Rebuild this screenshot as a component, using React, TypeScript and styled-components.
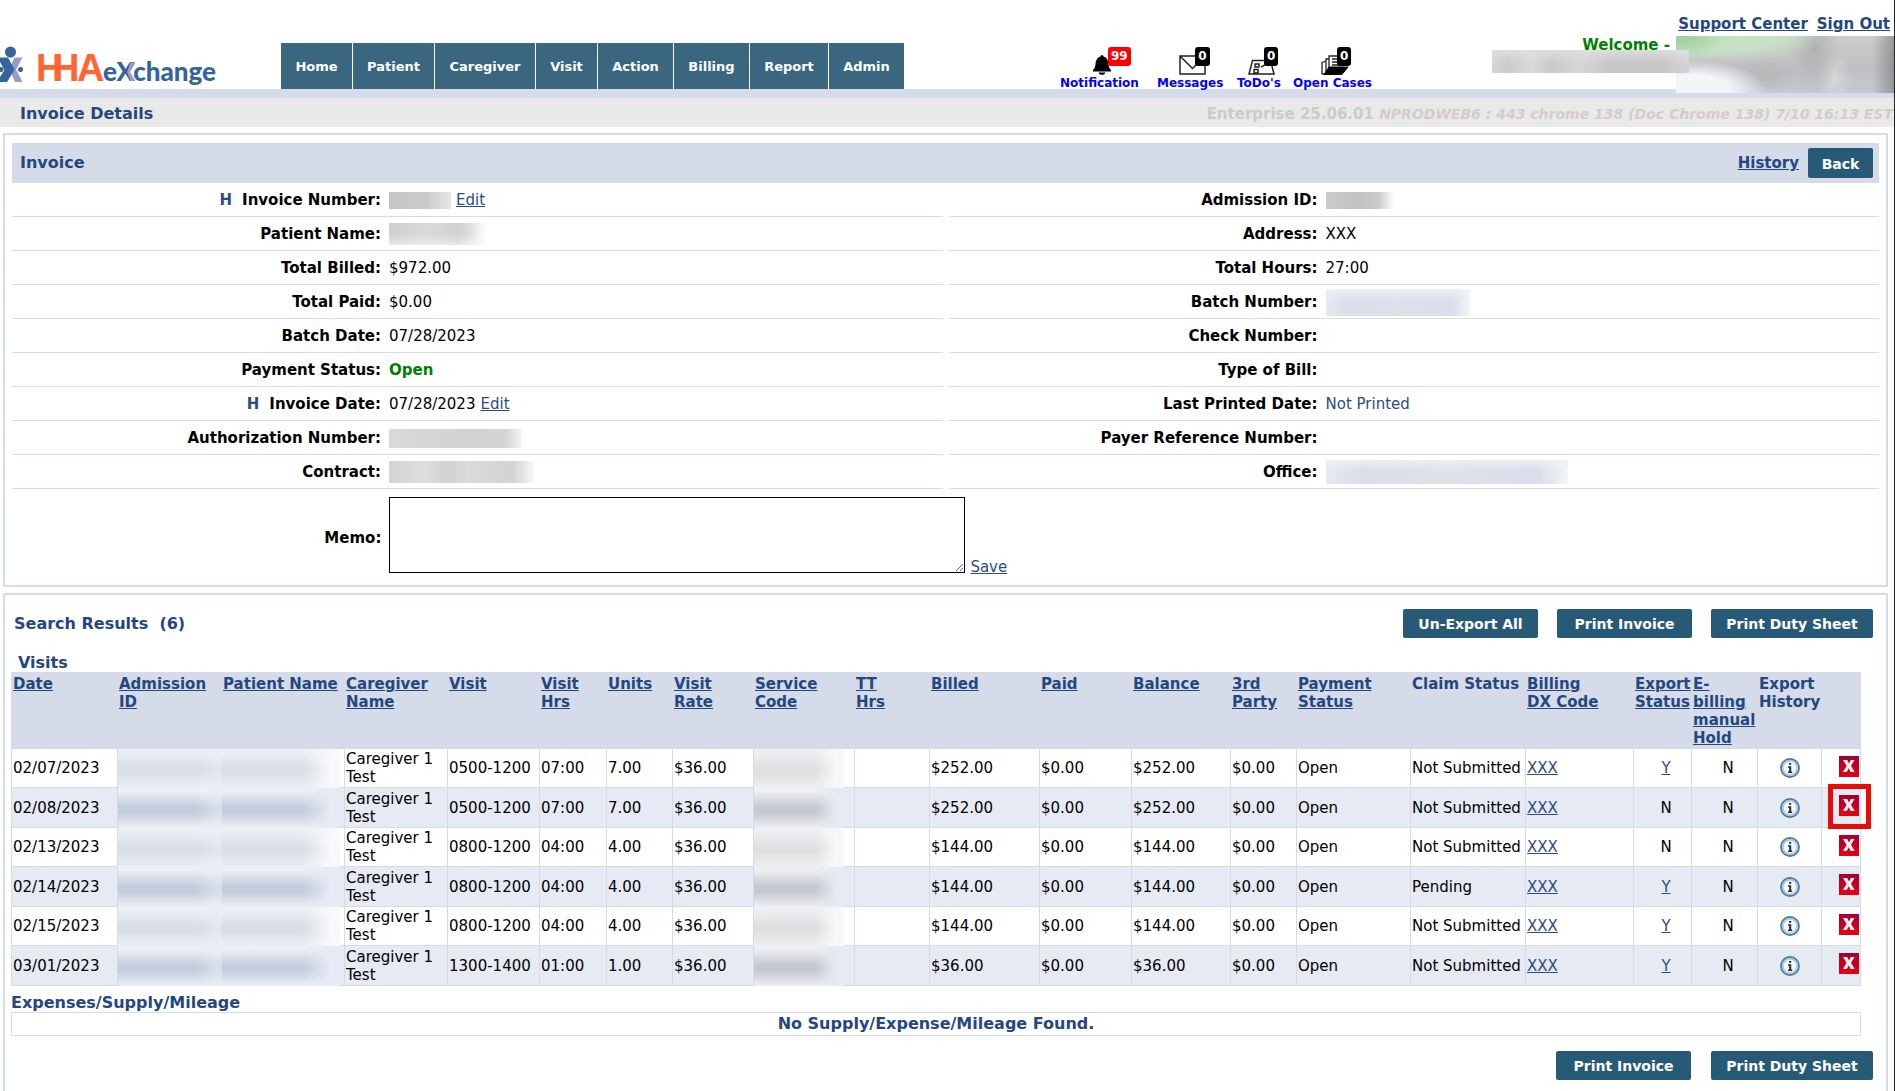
import React from "react";
import styled, { createGlobalStyle, css } from "styled-components";

const colors = {
  navy: "#24477f",
  link: "#2c4a86",
  line: "#d5dbe9",
  stripe: "#e5eaf3",
  button: "#275a77",
  nav: "#3b667f",
};

const GlobalStyle = createGlobalStyle`
  *, *::before, *::after { box-sizing: border-box; }
  html { background: #222; }
  body {
    margin: 0 1px 0 0;
    min-height: 100vh;
    background: #fff;
    color: #000;
    font: 15px/18px "DejaVu Sans", Verdana, sans-serif;
    overflow-x: hidden;
  }
`;

/* ---------- shared parts ---------- */

const Link = styled.a<{ $bold?: boolean }>`
  color: ${(p) => (p.$bold ? colors.navy : colors.link)};
  font-weight: ${(p) => (p.$bold ? 700 : 400)};
`;

const Button = styled.button<{ $wide?: number; $tall?: boolean }>`
  height: ${(p) => (p.$tall ? 30 : 29)}px;
  width: ${(p) => p.$wide}px;
  padding: 1px 0 0;
  border: 0;
  border-radius: 2px;
  background: ${colors.button};
  color: #fff;
  font: 700 14px/18px "DejaVu Sans", Verdana, sans-serif;
  cursor: pointer;
`;

const Heading = styled.h2`
  margin: 0;
  color: ${colors.navy};
  font-size: 16px;
  line-height: 18px;
  font-weight: 700;
`;

const Panel = styled.section`
  margin: 0 6px 6px 3px;
  border: 2px solid ${colors.line};
`;

const greyBlur = "linear-gradient(90deg, #c6c6c5, #c9cac9 60%, #e6e7e9)";
const paleBlur =
  "linear-gradient(180deg, rgba(255,255,255,0) 50%, rgba(255,255,255,.5)), linear-gradient(90deg, #cfcfcf, #dadada 40%, #cfd2d1 70%, #d9dbdb 80%, #fff)";
const blueBlur =
  "linear-gradient(180deg, rgba(238,240,245,.9), rgba(238,240,245,0) 45%), linear-gradient(90deg, #e6e9f0, #d9dee9 15%, #dde1ea 50%, #d8deea 88%, #f3f5f9)";

const Redacted = styled.span<{ $w: number; $h: number; $bg: string }>`
  display: inline-block;
  flex: none;
  width: ${(p) => p.$w}px;
  height: ${(p) => p.$h}px;
  background: ${(p) => p.$bg};
`;

/* ---------- header ---------- */

const Header = styled.header`
  display: flex;
  align-items: flex-end;
  height: 89px;
`;

const Nav = styled.nav`
  display: flex;
  gap: 1px;
  margin-left: 59px;
`;

const NavItem = styled.a<{ $wide: number }>`
  width: ${(p) => p.$wide}px;
  height: 46px;
  padding-top: 15px;
  background: ${colors.nav};
  color: #fff;
  font-weight: 700;
  font-size: 13px;
  line-height: 18px;
  text-align: center;
  text-decoration: none;
`;

const Alerts = styled.div`
  display: grid;
  grid-template-columns: 97px 80px 56px 80px;
  margin-left: 156px;
`;

const Alert = styled.a`
  display: flex;
  flex-direction: column;
  justify-self: start;
  align-items: center;
  color: #0000ff;
  font-weight: 700;
  font-size: 12px;
  line-height: 12px;
  white-space: nowrap;
  text-decoration: none;
`;

const AlertIcon = styled.span`
  position: relative;
  display: block;
  height: 28px;
  padding-top: 8px;
  margin: 0 0 2px 5px;
  svg { display: block; }
`;

const Badge = styled.span<{ $red?: boolean }>`
  position: absolute;
  top: 0;
  left: 16px;
  padding: 0 3px;
  border-radius: 3px;
  background: ${(p) => (p.$red ? "#f00" : "#000")};
  color: #fff;
  font-size: 12px;
  line-height: 19px;
`;

const UserArea = styled.div`
  align-self: flex-start;
  margin-left: auto;
  padding-top: 15px;
  position: relative;
  z-index: 1;
`;

const UserLinks = styled.div`
  display: flex;
  justify-content: flex-end;
  gap: 9px;
  padding-right: 4px;
  margin-bottom: 3px;
`;

const Welcome = styled.div`
  display: flex;
  justify-content: flex-end;
  gap: 6px;
  height: 57px;
  color: #008000;
  font-weight: 700;
  position: relative;
`;

const UserBlur = styled.span`
  width: 218px;
  height: 57px;
  background:
    linear-gradient(90deg, transparent 90%, rgba(100,100,105,.5)),
    radial-gradient(ellipse 75px 30px at 16px 54px, #f4f5f9 50%, transparent 100%),
    radial-gradient(ellipse 44px 22px at 8px 0, #a4d1a2 20%, transparent 100%),
    radial-gradient(ellipse 110px 26px at 40px 0, #c6e2c6 55%, transparent 100%),
    radial-gradient(ellipse 26px 50px at 138px 10px, #b2b2b2, transparent 100%),
    radial-gradient(ellipse 18px 30px at 158px 42px, #d6d6d8, transparent 100%),
    radial-gradient(ellipse 40px 16px at 90px 40px, #b4b6b8, transparent 100%),
    linear-gradient(180deg, #cdcdcd, #c0c0c0 55%, #c6c9d2);
`;

const AgencyBlur = styled.span`
  position: absolute;
  right: 205px;
  top: 14px;
  width: 197px;
  height: 23px;
  background:
    linear-gradient(180deg, rgba(225,225,225,.8), transparent 60%),
    linear-gradient(90deg, #d6d5d3, #cbcbcb 8%, #dadada 20%, #c9c9c9 30%, #d6d6d6 44%, #c6c6c6 60%, #c6c6c6 85%, #d3d4d2);
`;

const Band = styled.div`
  height: 9px;
  background: ${colors.line};
`;

const TitleBar = styled.div`
  display: flex;
  align-items: center;
  justify-content: space-between;
  height: 29px;
  padding: 2px 1px 0 20px;
  margin-bottom: 6px;
  background: #e9e9e9;
`;

const Version = styled.div`
  color: #cbcbcb;
  font-weight: 700;
  white-space: nowrap;
  i { color: #d6cbcb; font-size: 14px; }
`;

/* ---------- invoice form ---------- */

const InvoiceBody = styled.div`
  padding: 8px 7px 12px;
`;

const InvoiceHead = styled.div`
  display: flex;
  align-items: center;
  gap: 9px;
  height: 40px;
  padding: 0 6px 0 8px;
  background: ${colors.line};
  ${Heading} { margin-right: auto; }
`;

const Columns = styled.div`
  display: grid;
  grid-template-columns: 1fr 1fr;
  column-gap: 6px;
`;

const Field = styled.div`
  display: grid;
  grid-template-columns: 2fr 3fr;
  column-gap: 8px;
  align-items: center;
  height: 34px;
  padding-top: 1px;
  border-bottom: 1px solid ${colors.line};
`;

const FieldLabel = styled.span`
  text-align: right;
  font-weight: 700;
`;

const HistoryMark = styled.a`
  margin-right: 10px;
  color: ${colors.link};
  text-decoration: none;
`;

const FieldValue = styled.span<{ $tone?: "green" | "link" }>`
  display: flex;
  align-items: center;
  gap: 5px;
  ${(p) => p.$tone === "green" && css`color: #008000; font-weight: 700;`}
  ${(p) => p.$tone === "link" && css`color: ${colors.link};`}
`;

const MemoRow = styled.div`
  display: flex;
  align-items: center;
  padding-top: 8px;
`;

const MemoLabel = styled.label`
  width: calc(20% - 4px);
  flex: none;
  text-align: right;
  font-weight: 700;
  padding-top: 6px;
`;

const MemoBox = styled.textarea`
  width: 576px;
  height: 76px;
  margin: 0 5px 0 8px;
  border: 1px solid #000;
  background: #fff;
  font: inherit;
`;

const MemoSave = styled(Link)`
  align-self: flex-end;
  line-height: 12px;
`;

/* ---------- results ---------- */

const Results = styled.div`
  padding: 14px 13px 40px 6px;
`;

const ResultsHead = styled.div`
  display: flex;
  align-items: center;
  gap: 19px;
  padding-left: 3px;
  margin-bottom: 16px;
  ${Heading} { margin-right: auto; }
`;

const TableArea = styled.div`
  margin-right: 12px;
`;

const Table = styled.table`
  width: 100%;
  table-layout: fixed;
  border-collapse: collapse;
  caption {
    padding-left: 7px;
    text-align: left;
    color: ${colors.navy};
    font-size: 16px;
    font-weight: 700;
  }
`;

const Th = styled.th`
  padding: 2px 0 1px 1px;
  background: ${colors.line};
  border: 1px solid ${colors.line};
  color: ${colors.navy};
  text-align: left;
  vertical-align: top;
  font-weight: 700;
`;

const Row = styled.tr<{ $shaded: boolean }>`
  height: ${(p) => (p.$shaded ? 40 : 39)}px;
  background: ${(p) => (p.$shaded ? colors.stripe : "#fff")};
`;

const Td = styled.td<{ $align?: "center" | "mark" | "right" }>`
  position: relative;
  padding: 1px 0 1px 1px;
  border: 1px solid ${colors.line};
  ${(p) => p.$align === "mark" && css`text-align: center; padding-left: 7px;`}
  ${(p) => p.$align === "center" && css`text-align: center; padding: 0;`}
  ${(p) => p.$align === "right" && css`text-align: right; padding: 0 1px 4px 0;`}
`;

const CellBlur = styled.span<{
  $shaded: boolean;
  $tint: "blue" | "grey";
  $right: number;
  $fade?: boolean;
}>`
  position: absolute;
  top: 0;
  bottom: -1px;
  left: 0;
  right: ${(p) => p.$right}px;
  background: ${(p) => {
    const edge = p.$tint === "blue" ? "#eceff5" : "#eeeff2";
    const core =
      p.$tint === "blue" ? (p.$shaded ? "#c3cddd" : "#d9dde6") : p.$shaded ? "#c4c8d1" : "#dfe0df";
    const side = p.$shaded ? colors.stripe : "#f7f8fa";
    const fade = p.$fade
      ? `linear-gradient(90deg, transparent 68%, ${side} 92%)`
      : `linear-gradient(90deg, transparent 75%, ${edge}80 95%)`;
    return `${fade}, linear-gradient(180deg, ${edge} 8%, ${core} 48%, ${core} 62%, ${edge} 100%)`;
  }};
`;

const IconButton = styled.button`
  display: inline-block;
  padding: 0;
  border: 0;
  background: none;
  vertical-align: middle;
  cursor: pointer;
  svg { display: block; }
`;

const Highlight = styled.span`
  position: absolute;
  top: -4px;
  right: -11px;
  width: 43px;
  height: 45px;
  border: 5px solid #ea0a0a;
  pointer-events: none;
  z-index: 1;
`;

const SubHeading = styled(Heading)`
  margin-top: 8px;
`;

const EmptyNote = styled.p`
  margin: 0 0 15px;
  height: 24px;
  border: 1px solid ${colors.line};
  color: ${colors.navy};
  font-size: 16px;
  line-height: 22px;
  font-weight: 700;
  text-align: center;
`;

const Footer = styled.div`
  display: flex;
  justify-content: flex-end;
  gap: 20px;
`;

/* ---------- drawings ---------- */

const Logo = () => (
  <svg width="222" height="45" viewBox="0 0 222 45" role="img" aria-label="HHAeXchange">
    <circle cx="10.500" cy="8" r="5.500" fill="#33659a" />
    <path d="M14.500 13.500H22.500L16 25.500 22.500 38H15L10.500 28 9 25.500Z" fill="#9b98cd" />
    <path d="M0 13.500H8L14.500 25.500 7 38H0V33L4.500 26 0 18Z" fill="#33659a" />
    <circle cx="1" cy="25.500" r="2.500" fill="#33659a" />
    <circle cx="20.500" cy="25.500" r="2.500" fill="#33659a" />
    <text
      x="36 52 77"
      y="37"
      fill="#ff6633"
      fontFamily="Liberation Sans, Arial, sans-serif"
      fontWeight="700"
      fontSize="38"
    >
      HHA
    </text>
    <text x="103" y="37" fill="#33659a" fontFamily="Lato, sans-serif" fontWeight="900" fontSize="26">
      e<tspan>X</tspan>change
    </text>
    <path d="M130.500 18.500H135.500L130 28 135.500 37H130.500L127 28Z" fill="#9b98cd" />
  </svg>
);

const BellIcon = () => (
  <svg width="20" height="20" viewBox="0 0 20 20">
    <path d="M8.500 1.500a1.500 1.500 0 0 1 3 0C15 2.500 16 5 16.500 9c.3 3 .8 4.500 2.500 6v1.500H1V15c1.700-1.500 2.200-3 2.500-6C4 5 5 2.500 8.500 1.500ZM6.500 17.500h7c-.5 1.500-1.700 2.300-3.500 2.300s-3-.8-3.500-2.300Z" />
  </svg>
);

const MailIcon = () => (
  <svg width="27" height="20" viewBox="0 0 27 20" fill="none" stroke="#222" strokeWidth="1.500">
    <path d="M1 1h25v18H1zM1 1l12.500 12.500L26 1" />
  </svg>
);

const TodoIcon = () => (
  <svg width="27" height="20" viewBox="0 0 27 20" fill="none" stroke="#222" strokeWidth="1.500">
    <path d="M4.500 5.500h18L26 19H1zM7 9h4v3H7zM6 14.500h4V18H6zM13 12l4-2 3-4" />
  </svg>
);

const CasesIcon = () => (
  <svg width="28" height="20" viewBox="0 0 28 20" fill="none" stroke="#222" strokeWidth="1.300">
    <path d="M1 19V7.500L5 6M1 19h4M5 18V4h3M8 12V1h15v10M11 4h9M11 7h9M11 10h9" />
    <path d="M8 12h19l-6 7.500H3z" fill="#000" stroke="#000" strokeWidth="1" />
  </svg>
);

const InfoIcon = () => (
  <svg width="20" height="20" viewBox="0 0 20 20">
    <circle cx="10" cy="10" r="9" fill="#f6f9fc" stroke="#4a79a6" strokeWidth="1.800" />
    <circle cx="10" cy="10" r="7.300" fill="none" stroke="#a9c4dd" strokeWidth="1.800" />
    <path d="M9 5h2.200v1.800H9zM8 8.300h3.200v5.200h1V15H8v-1.500h1.200V9.700H8z" fill="#2b2b2b" />
  </svg>
);

const DeleteIcon = () => (
  <svg width="20" height="21" viewBox="0 0 20 21">
    <defs>
      <linearGradient id="deleteFill" x1="0" y1="0" x2="0" y2="1">
        <stop offset="0" stopColor="#a00034" />
        <stop offset="1" stopColor="#e6000f" />
      </linearGradient>
    </defs>
    <rect width="20" height="21" fill="url(#deleteFill)" />
    <path
      d="M4 4h4.200L10 7.500 11.800 4H15.500L12 9.800 15.700 16H11.600L9.700 12.300 7.800 16H3.800L7.600 9.900Z"
      fill="#fbeef2"
    />
  </svg>
);

/* ---------- data ---------- */

const navItems = [
  { label: "Home", width: 71 },
  { label: "Patient", width: 81 },
  { label: "Caregiver", width: 100 },
  { label: "Visit", width: 61 },
  { label: "Action", width: 75 },
  { label: "Billing", width: 75 },
  { label: "Report", width: 78 },
  { label: "Admin", width: 75 },
];

const alerts = [
  { label: "Notification", count: 99, icon: <BellIcon /> },
  { label: "Messages", count: 0, icon: <MailIcon /> },
  { label: "ToDo's", count: 0, icon: <TodoIcon /> },
  { label: "Open Cases", count: 0, icon: <CasesIcon /> },
];

type FieldData = { label: string; mark?: boolean; value?: React.ReactNode; tone?: "green" | "link" };

const leftFields: FieldData[] = [
  { label: "Invoice Number:", mark: true, value: <><Redacted $w={62} $h={17} $bg={greyBlur} /><Link href="#">Edit</Link></> },
  { label: "Patient Name:", value: <Redacted $w={98} $h={22} $bg={paleBlur} /> },
  { label: "Total Billed:", value: "$972.00" },
  { label: "Total Paid:", value: "$0.00" },
  { label: "Batch Date:", value: "07/28/2023" },
  { label: "Payment Status:", value: "Open", tone: "green" },
  { label: "Invoice Date:", mark: true, value: <>07/28/2023<Link href="#">Edit</Link></> },
  { label: "Authorization Number:", value: <Redacted $w={132} $h={19} $bg="linear-gradient(90deg, #d9d9d9, #d2d2d2 60%, #d3d4d4 88%, #f0f1f3)" /> },
  { label: "Contract:", value: <Redacted $w={145} $h={22} $bg="linear-gradient(90deg, #d3d3d3, #dedede 25%, #d2d2d2 40%, #dadada 55%, #d3d3d3 85%, #f7f8f7)" /> },
];

const rightFields: FieldData[] = [
  { label: "Admission ID:", value: <Redacted $w={68} $h={17} $bg="linear-gradient(90deg, #cbcaca, #c2c3c2 50%, #c8c9c9 76%, #fff)" /> },
  { label: "Address:", value: "XXX" },
  { label: "Total Hours:", value: "27:00" },
  { label: "Batch Number:", value: <Redacted $w={144} $h={27} $bg={blueBlur} /> },
  { label: "Check Number:" },
  { label: "Type of Bill:" },
  { label: "Last Printed Date:", value: "Not Printed", tone: "link" },
  { label: "Payer Reference Number:" },
  { label: "Office:", value: <Redacted $w={242} $h={24} $bg={blueBlur} /> },
];

const columns: { label: string; width: number; plain?: boolean }[] = [
  { label: "Date", width: 106 },
  { label: "Admission ID", width: 104 },
  { label: "Patient Name", width: 123 },
  { label: "Caregiver Name", width: 103 },
  { label: "Visit", width: 92 },
  { label: "Visit Hrs", width: 67 },
  { label: "Units", width: 66 },
  { label: "Visit Rate", width: 81 },
  { label: "Service Code", width: 101 },
  { label: "TT\nHrs", width: 75 },
  { label: "Billed", width: 110 },
  { label: "Paid", width: 92 },
  { label: "Balance", width: 99 },
  { label: "3rd Party", width: 66 },
  { label: "Payment Status", width: 114 },
  { label: "Claim Status", width: 115, plain: true },
  { label: "Billing\nDX Code", width: 108 },
  { label: "Export Status", width: 58 },
  { label: "E-\nbilling manual Hold", width: 66 },
  { label: "Export History", width: 64, plain: true },
  { label: "", width: 39, plain: true },
];

const visits = [
  { date: "02/07/2023", time: "0500-1200", hrs: "07:00", units: "7.00", billed: "$252.00", claim: "Not Submitted", exported: true },
  { date: "02/08/2023", time: "0500-1200", hrs: "07:00", units: "7.00", billed: "$252.00", claim: "Not Submitted", exported: false, highlight: true },
  { date: "02/13/2023", time: "0800-1200", hrs: "04:00", units: "4.00", billed: "$144.00", claim: "Not Submitted", exported: false },
  { date: "02/14/2023", time: "0800-1200", hrs: "04:00", units: "4.00", billed: "$144.00", claim: "Pending", exported: true },
  { date: "02/15/2023", time: "0800-1200", hrs: "04:00", units: "4.00", billed: "$144.00", claim: "Not Submitted", exported: true },
  { date: "03/01/2023", time: "1300-1400", hrs: "01:00", units: "1.00", billed: "$36.00", claim: "Not Submitted", exported: true },
];

const HeaderLabel = styled(Link)`
  white-space: pre-line;
`;

const FieldList = ({ fields }: { fields: FieldData[] }) => (
  <div>
    {fields.map((f) => (
      <Field key={f.label}>
        <FieldLabel>
          {f.mark && <HistoryMark href="#">H</HistoryMark>}
          {f.label}
        </FieldLabel>
        <FieldValue $tone={f.tone}>{f.value}</FieldValue>
      </Field>
    ))}
  </div>
);

export default function App() {
  return (
    <>
      <GlobalStyle />
      <Header>
        <Logo />
        <Nav>
          {navItems.map((n) => (
            <NavItem key={n.label} href="#" $wide={n.width}>{n.label}</NavItem>
          ))}
        </Nav>
        <Alerts>
          {alerts.map((a) => (
            <Alert key={a.label} href="#">
              <AlertIcon>
                {a.icon}
                <Badge $red={a.count > 0}>{a.count}</Badge>
              </AlertIcon>
              {a.label}
            </Alert>
          ))}
        </Alerts>
        <UserArea>
          <UserLinks>
            <Link $bold href="#">Support Center</Link>
            <Link $bold href="#">Sign Out</Link>
          </UserLinks>
          <Welcome>
            Welcome -
            <UserBlur />
            <AgencyBlur />
          </Welcome>
        </UserArea>
      </Header>
      <Band />
      <TitleBar>
        <Heading as="h1">Invoice Details</Heading>
        <Version>
          Enterprise 25.06.01 <i>NPRODWEB6 : 443 chrome 138 (Doc Chrome 138) 7/10 16:13 EST</i>
        </Version>
      </TitleBar>

      <Panel>
        <InvoiceBody>
          <InvoiceHead>
            <Heading>Invoice</Heading>
            <Link $bold href="#">History</Link>
            <Button $wide={65} $tall>Back</Button>
          </InvoiceHead>
          <Columns>
            <FieldList fields={leftFields} />
            <FieldList fields={rightFields} />
          </Columns>
          <MemoRow>
            <MemoLabel htmlFor="memo">Memo:</MemoLabel>
            <MemoBox id="memo" />
            <MemoSave href="#">Save</MemoSave>
          </MemoRow>
        </InvoiceBody>
      </Panel>

      <Panel>
        <Results>
          <ResultsHead>
            <Heading>Search Results&nbsp; (6)</Heading>
            <Button $wide={135}>Un-Export All</Button>
            <Button $wide={135}>Print Invoice</Button>
            <Button $wide={162}>Print Duty Sheet</Button>
          </ResultsHead>
          <TableArea>
            <Table>
              <caption>Visits</caption>
              <colgroup>
                {columns.map((c, i) => (
                  <col key={i} style={{ width: c.width }} />
                ))}
              </colgroup>
              <thead>
                <tr>
                  {columns.map((c, i) => (
                    <Th key={i} scope="col">
                      {c.plain ? c.label : <HeaderLabel $bold href="#">{c.label}</HeaderLabel>}
                    </Th>
                  ))}
                </tr>
              </thead>
              <tbody>
                {visits.map((v, i) => {
                  const shaded = i % 2 === 1;
                  return (
                    <Row key={v.date} $shaded={shaded}>
                      <Td>{v.date}</Td>
                      <Td><CellBlur $shaded={shaded} $tint="blue" $right={-1} /></Td>
                      <Td><CellBlur $shaded={shaded} $tint="blue" $right={4} $fade /></Td>
                      <Td>Caregiver 1 Test</Td>
                      <Td>{v.time}</Td>
                      <Td>{v.hrs}</Td>
                      <Td>{v.units}</Td>
                      <Td>$36.00</Td>
                      <Td><CellBlur $shaded={shaded} $tint="grey" $right={10} $fade /></Td>
                      <Td />
                      <Td>{v.billed}</Td>
                      <Td>$0.00</Td>
                      <Td>{v.billed}</Td>
                      <Td>$0.00</Td>
                      <Td>Open</Td>
                      <Td>{v.claim}</Td>
                      <Td><Link href="#">XXX</Link></Td>
                      <Td $align="mark">{v.exported ? <Link href="#">Y</Link> : "N"}</Td>
                      <Td $align="mark">N</Td>
                      <Td $align="center">
                        <IconButton aria-label="Export history"><InfoIcon /></IconButton>
                      </Td>
                      <Td $align="right">
                        <IconButton aria-label="Delete visit"><DeleteIcon /></IconButton>
                        {v.highlight && <Highlight />}
                      </Td>
                    </Row>
                  );
                })}
              </tbody>
            </Table>
            <SubHeading as="h3">Expenses/Supply/Mileage</SubHeading>
            <EmptyNote>No Supply/Expense/Mileage Found.</EmptyNote>
          </TableArea>
          <Footer>
            <Button $wide={135}>Print Invoice</Button>
            <Button $wide={162}>Print Duty Sheet</Button>
          </Footer>
        </Results>
      </Panel>
    </>
  );
}
